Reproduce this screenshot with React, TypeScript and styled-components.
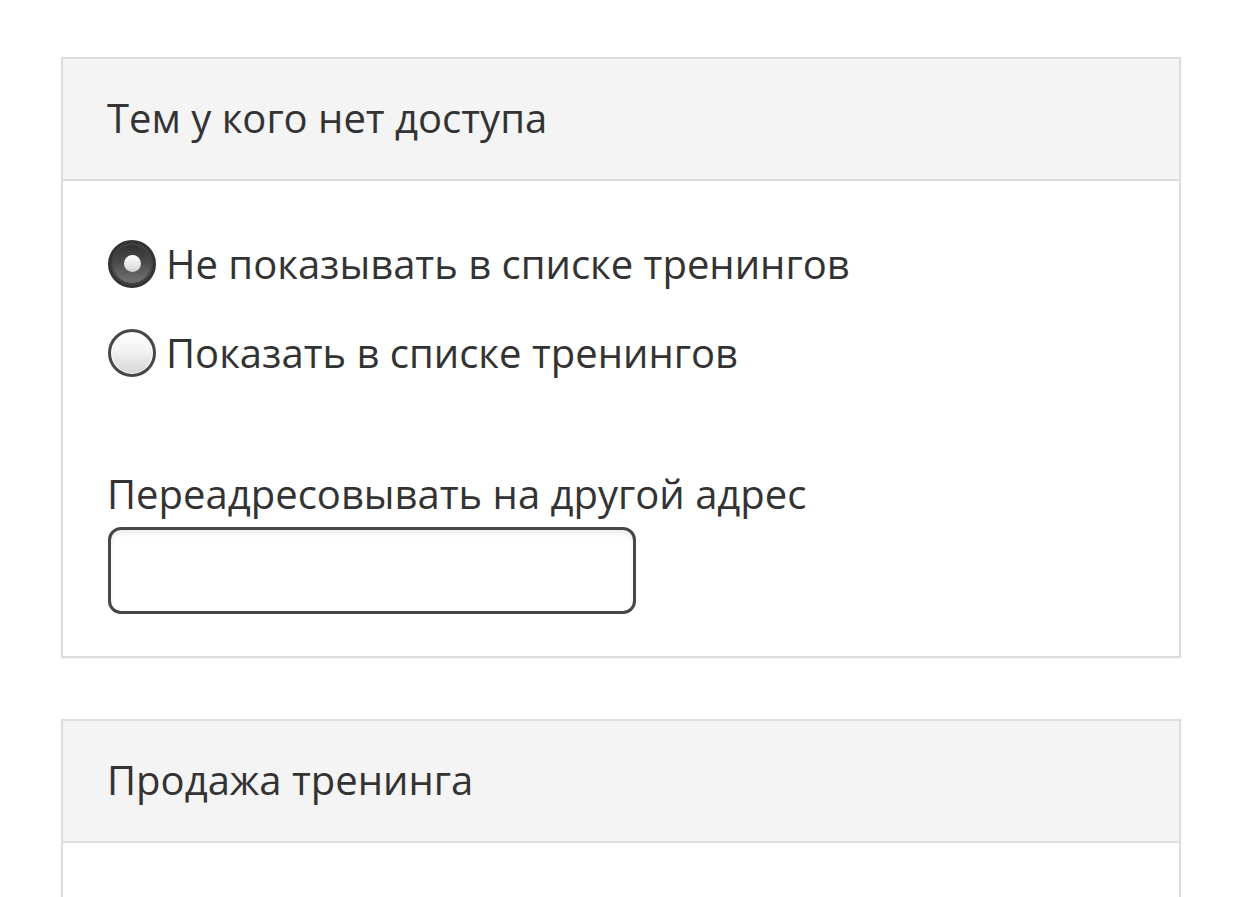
import React from "react";
import styled, { createGlobalStyle } from "styled-components";

const Global = createGlobalStyle`
  html, body { margin: 0; padding: 0; background: #fff; }
  body { font-family: "Open Sans", Lato, sans-serif; color: #333; }
`;

const Page = styled.div`
  display: flex;
  flex-direction: column;
  gap: 61px;
  padding: 57px 61px 0 61px;
  height: 897px;
  box-sizing: border-box;
  overflow: hidden;
`;

const Panel = styled.section`
  border: 2px solid #dddddd;
  background: #fff;
  box-shadow: 0 1px 2px rgba(0, 0, 0, 0.06);
  flex-shrink: 0;
`;

const PanelHeader = styled.div`
  height: 122px;
  background: #f4f4f4;
  border-bottom: 2px solid #dddddd;
  display: flex;
  align-items: center;
  padding: 0 45px 4px 44px;
  font-size: 40px;
  color: #333;
  box-sizing: border-box;
`;

const PanelBody = styled.div<{ $minHeight?: number }>`
  padding: 59px 45px 42px 45px;
  display: flex;
  flex-direction: column;
  min-height: ${(p) => (p.$minHeight ? `${p.$minHeight}px` : "0")};
`;

const RadioGroup = styled.div`
  display: flex;
  flex-direction: column;
  gap: 41px;
  margin-bottom: 95px;
`;

const RadioRow = styled.label`
  display: flex;
  align-items: center;
  gap: 10px;
  font-size: 40px;
  line-height: 48px;
  color: #333;
`;

const RadioMark = styled.span<{ $checked?: boolean }>`
  width: 48px;
  height: 48px;
  border-radius: 50%;
  box-sizing: border-box;
  border: 3px solid ${(p) => (p.$checked ? "#333" : "#464646")};
  display: flex;
  align-items: center;
  justify-content: center;
  flex-shrink: 0;
  background: ${(p) =>
    p.$checked
      ? "linear-gradient(180deg, #2e2e2e 0%, #4a4a4a 45%, #777 100%)"
      : "linear-gradient(180deg, #ffffff 0%, #f2f2f2 45%, #d6d6d6 100%)"};
  box-shadow: ${(p) =>
    p.$checked ? "inset 0 0 0 2px #444" : "inset 0 0 0 1px #ffffff"};
  &::after {
    content: "";
    display: ${(p) => (p.$checked ? "block" : "none")};
    width: 17px;
    height: 17px;
    margin-top: -1px;
    border-radius: 50%;
    background: linear-gradient(180deg, #ffffff 0%, #e6e6e6 60%, #cfcfcf 100%);
  }
`;

const FieldLabel = styled.div`
  font-size: 40px;
  line-height: 44px;
  color: #333;
  margin: 0 0 11px -1px;
`;

const TextInput = styled.input`
  width: 528px;
  height: 87px;
  box-sizing: border-box;
  border: 3px solid #474747;
  border-radius: 13px;
  box-shadow: inset 0 4px 5px rgba(0, 0, 0, 0.07);
  background: #fff;
  font-size: 32px;
  padding: 0 16px;
  outline: none;
`;

export default function App() {
  return (
    <>
      <Global />
      <Page>
        <Panel>
          <PanelHeader>Тем у кого нет доступа</PanelHeader>
          <PanelBody>
            <RadioGroup>
              <RadioRow>
                <RadioMark $checked />
                Не показывать в списке тренингов
              </RadioRow>
              <RadioRow>
                <RadioMark />
                Показать в списке тренингов
              </RadioRow>
            </RadioGroup>
            <FieldLabel>Переадресовывать на другой адрес</FieldLabel>
            <TextInput type="text" />
          </PanelBody>
        </Panel>
        <Panel>
          <PanelHeader>Продажа тренинга</PanelHeader>
          <PanelBody $minHeight={200} />
        </Panel>
      </Page>
    </>
  );
}
